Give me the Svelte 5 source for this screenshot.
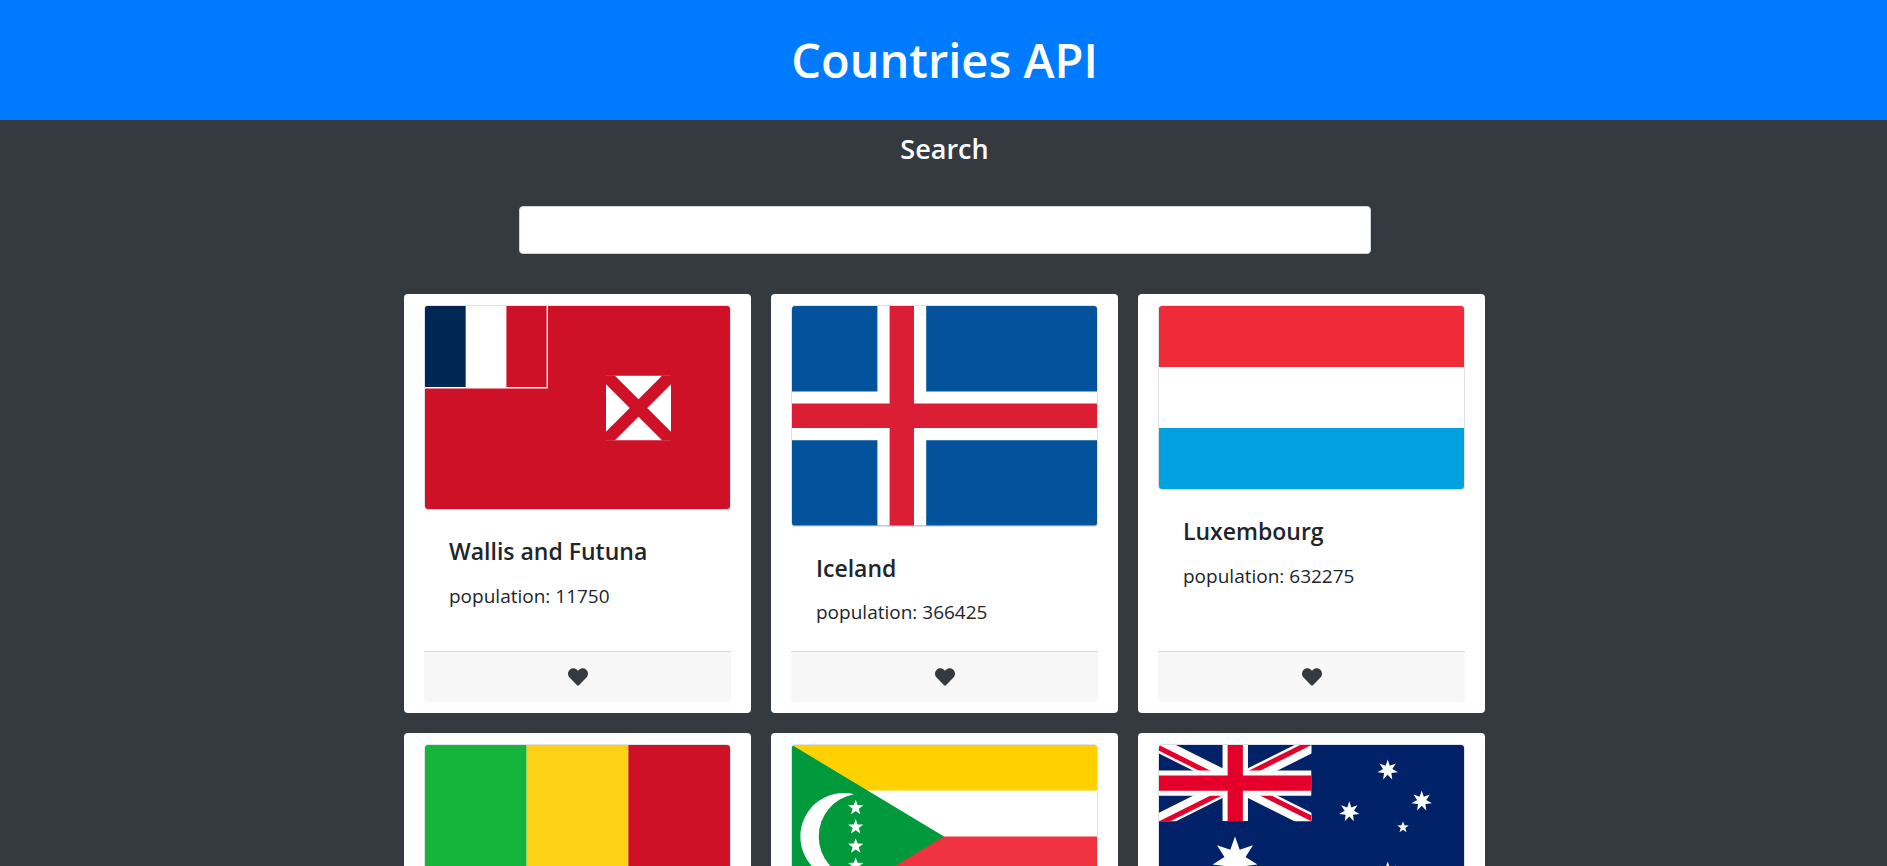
<script>
    const countries = [
        {name: 'Wallis and Futuna', population: 11750, flag: 'wf'},
        {name: 'Iceland', population: 366425, flag: 'is'},
        {name: 'Luxembourg', population: 632275, flag: 'lu'},
        {name: 'Mali', population: 20250833, flag: 'ml'},
        {name: 'Comoros', population: 869601, flag: 'km'},
        {name: 'Australia', population: 25499884, flag: 'au'},
    ]

    // points of an n-pointed star for the flags
    function star(cx, cy, r, n = 5, inner = 0.4){
        let pts = []
        for(let i = 0; i < n * 2; i++){
            const rad = i % 2 ? r * inner : r
            const a = -Math.PI / 2 + i * Math.PI / n
            pts.push((cx + rad * Math.cos(a)).toFixed(2) + ',' + (cy + rad * Math.sin(a)).toFixed(2))
        }
        return pts.join(' ')
    }
</script>

<div class="page">
    <header class="banner">
        <h1>Countries API</h1>
    </header>

    <section class="search">
        <h3>Search</h3>
        <input type="text" />
    </section>

    <main class="grid">
        {#each countries as c}
            <article class="card">
                {#if c.flag === 'wf'}
                    <svg class="flag" viewBox="0 0 305 203">
                        <rect width="305" height="203" fill="#ce1126" />
                        <rect width="40.7" height="81" fill="#002654" />
                        <rect x="40.7" width="40.7" height="81" fill="#fff" />
                        <path d="M0 81.7H122.3V0" fill="none" stroke="#fff" stroke-width="1.4" />
                        <svg x="181" y="69.5" width="65" height="65" viewBox="0 0 65 65">
                            <rect width="65" height="65" fill="#fff" />
                            <path d="M0 0L65 65M65 0L0 65" stroke="#ce1126" stroke-width="12.3" />
                        </svg>
                    </svg>
                {:else if c.flag === 'is'}
                    <svg class="flag" viewBox="0 0 25 18">
                        <rect width="25" height="18" fill="#02529c" />
                        <path d="M7 0h4v7h14v4H11v7H7v-7H0V7h7z" fill="#fff" />
                        <path d="M8 0h2v8h15v2H10v8H8v-8H0V8h8z" fill="#dc1e35" />
                    </svg>
                {:else if c.flag === 'lu'}
                    <svg class="flag" viewBox="0 0 5 3">
                        <rect width="5" height="1" fill="#ef2b3a" />
                        <rect y="1" width="5" height="1" fill="#fff" />
                        <rect y="2" width="5" height="1" fill="#00a1de" />
                    </svg>
                {:else if c.flag === 'ml'}
                    <svg class="flag" viewBox="0 0 3 2">
                        <rect width="1" height="2" fill="#14b53a" />
                        <rect x="1" width="1" height="2" fill="#fcd116" />
                        <rect x="2" width="1" height="2" fill="#ce1126" />
                    </svg>
                {:else if c.flag === 'km'}
                    <svg class="flag" viewBox="0 0 305 183">
                        <rect width="305" height="45.75" fill="#ffd100" />
                        <rect y="45.75" width="305" height="45.75" fill="#fff" />
                        <rect y="91.5" width="305" height="45.75" fill="#ef3340" />
                        <rect y="137.25" width="305" height="45.75" fill="#003da5" />
                        <path d="M0 0L152 91.5L0 183z" fill="#009a3d" />
                        <path d="M62 49.2A43.5 43.5 0 1 0 62 133.8A43 43 0 0 1 62 49.2z" fill="#fff" />
                        {#each [62.7, 82, 101.2, 120.4] as y}
                            <polygon points={star(63.7, y, 8)} fill="#fff" />
                        {/each}
                    </svg>
                {:else}
                    <svg class="flag" viewBox="0 0 305 152.5">
                        <rect width="305" height="152.5" fill="#012169" />
                        <svg width="152.5" height="76.25" viewBox="0 0 60 30">
                            <clipPath id="jack">
                                <path d="M30 15h30v15zv15h-30zh-30v-15zv-15h30z" />
                            </clipPath>
                            <path d="M0 0L60 30M60 0L0 30" stroke="#fff" stroke-width="6" />
                            <path d="M0 0L60 30M60 0L0 30" stroke="#e4002b" stroke-width="4" clip-path="url(#jack)" />
                            <path d="M30 0V30M0 15H60" stroke="#fff" stroke-width="10" />
                            <path d="M30 0V30M0 15H60" stroke="#e4002b" stroke-width="6" />
                        </svg>
                        <polygon points={star(76, 114.5, 23, 7, 0.47)} fill="#fff" />
                        <polygon points={star(228.7, 25, 10.5, 7, 0.45)} fill="#fff" />
                        <polygon points={star(262.7, 56, 10.5, 7, 0.45)} fill="#fff" />
                        <polygon points={star(190.3, 66.7, 10.5, 7, 0.45)} fill="#fff" />
                        <polygon points={star(228.7, 127, 10.5, 7, 0.45)} fill="#fff" />
                        <polygon points={star(244, 82.3, 6)} fill="#fff" />
                    </svg>
                {/if}
                <div class="card-body">
                    <h4>{c.name}</h4>
                    <p>population: {c.population}</p>
                </div>
                <div class="card-footer">
                    <svg class="heart" viewBox="0 0 512 512">
                        <path d="M462.3 62.6C407.5 15.9 326 24.3 275.7 76.2L256 96.5l-19.7-20.3C186.1 24.3 104.5 15.9 49.7 62.6c-62.8 53.6-66.1 149.8-9.9 207.9l193.5 199.8c12.5 12.9 32.8 12.9 45.3 0l193.5-199.8c56.3-58.1 53-154.3-9.8-207.9z" />
                    </svg>
                </div>
            </article>
        {/each}
    </main>
</div>

<style>
    :global(body){
        margin: 0;
        overflow: hidden;
        background: #343a40;
    }
    .page{
        width: 1889px;
        height: 100vh;
        overflow: hidden;
        background: #343a40;
        font-family: "Open Sans", "Noto Sans", sans-serif;
        color: #212529;
    }
    .banner{
        height: 120px;
        display: flex;
        align-items: center;
        justify-content: center;
        background: #007bff;
    }
    .banner h1{
        margin: 0;
        font-size: 47px;
        font-weight: 600;
        line-height: 1.2;
        color: #fff;
    }
    .search{
        display: flex;
        flex-direction: column;
        align-items: center;
    }
    .search h3{
        margin: 13px 0 41px;
        font-size: 27px;
        font-weight: 600;
        line-height: 32px;
        color: #fff;
    }
    .search input{
        box-sizing: border-box;
        width: 852px;
        height: 48px;
        border: 1px solid #ced4da;
        border-radius: 4px;
        background: #fff;
    }
    .grid{
        display: grid;
        grid-template-columns: repeat(3, 347px);
        gap: 20px;
        justify-content: center;
        margin-top: 40px;
    }
    .card{
        box-sizing: border-box;
        display: flex;
        flex-direction: column;
        padding: 11px 20px;
        background: #fff;
        border-radius: 4px;
    }
    .flag{
        display: block;
        box-sizing: border-box;
        width: 100%;
        height: auto;
        border: 1px solid #dee2e6;
        border-radius: 4px;
    }
    .card-body{
        flex: 1;
        padding: 28px 25px 8px;
    }
    .card-body h4{
        margin: 0 0 16px;
        font-size: 23px;
        font-weight: 600;
        line-height: 1.2;
    }
    .card-body p{
        margin: 0 0 16px;
        font-size: 19px;
        line-height: 1.5;
    }
    .card-footer{
        display: flex;
        justify-content: center;
        padding: 15px 0;
        border-top: 1px solid rgba(0, 0, 0, 0.125);
        border-radius: 0 0 4px 4px;
        background: rgba(0, 0, 0, 0.03);
    }
    .heart{
        display: block;
        width: 20px;
        height: 20px;
        fill: #343a40;
    }
</style>
